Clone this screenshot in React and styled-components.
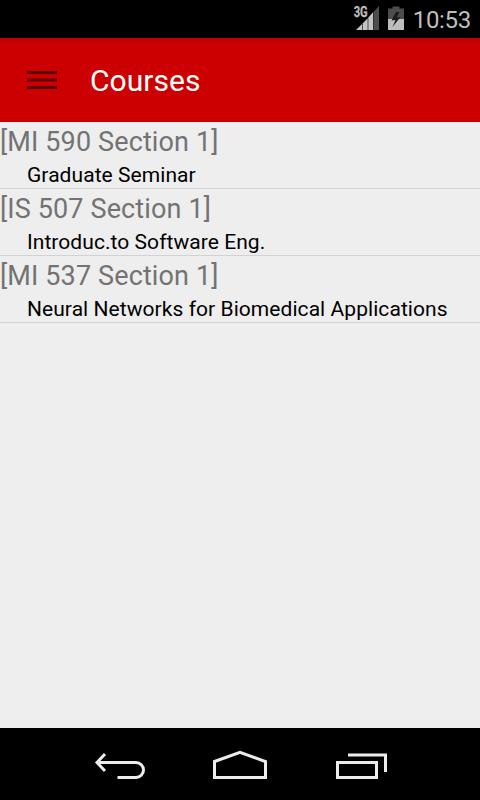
import React from "react";
import styled, { createGlobalStyle } from "styled-components";

const GlobalStyle = createGlobalStyle`
  * {
    box-sizing: border-box;
  }

  body {
    margin: 0;
    background: #000;
    font-family: Roboto, "Liberation Sans", sans-serif;
  }
`;

const Screen = styled.div`
  display: flex;
  flex-direction: column;
  height: 100vh;
  overflow: hidden;
  background: #eeeeee;
`;

const StatusBar = styled.div`
  display: flex;
  flex: none;
  align-items: center;
  justify-content: flex-end;
  height: 38px;
  padding-right: 9px;
  background: #000;
`;

const StatusIcon = styled.svg`
  display: block;
  flex: none;
  font-family: Roboto, sans-serif;
`;

const Clock = styled.span`
  margin-left: 8px;
  font-size: 24px;
  line-height: 38px;
  padding-top: 1px;
  letter-spacing: -0.3px;
  white-space: nowrap;
  color: #bebebe;
`;

const Toolbar = styled.header`
  display: flex;
  flex: none;
  align-items: center;
  height: 84px;
  padding-left: 27px;
  background: linear-gradient(#bd0000, #cc0000 6px);
`;

const MenuButton = styled.button`
  display: flex;
  width: 30px;
  padding: 0;
  border: none;
  background: none;
  cursor: pointer;
`;

const Title = styled.h1`
  margin: 0 0 0 33px;
  padding-top: 2px;
  font-size: 30px;
  font-weight: 400;
  line-height: 36px;
  letter-spacing: 0.05px;
  white-space: nowrap;
  color: #fff;
`;

const CourseList = styled.ul`
  flex: 1;
  margin: 0;
  padding: 0;
  list-style: none;
`;

const CourseRow = styled.li`
  height: 67px;
  border-bottom: 1px solid #d2d2d2;
`;

const CourseCode = styled.div`
  height: 39px;
  font-size: 27px;
  line-height: 41px;
  letter-spacing: 0.13px;
  white-space: nowrap;
  color: #737373;
`;

const CourseName = styled.div`
  padding-left: 27px;
  font-size: 21px;
  line-height: 28px;
  letter-spacing: 0.06px;
  white-space: nowrap;
  color: #000;
`;

const NavBar = styled.nav`
  display: flex;
  flex: none;
  justify-content: center;
  height: 72px;
  background: #000;
`;

const NavButton = styled.button`
  width: 121px;
  height: 72px;
  padding: 0;
  border: none;
  background: none;
  cursor: pointer;

  svg {
    display: block;
    margin: 0 auto;
    fill: none;
    stroke: #ececec;
    stroke-width: 3;
  }
`;

const courses = [
  { code: "[MI 590 Section 1]", name: "Graduate Seminar" },
  { code: "[IS 507 Section 1]", name: "Introduc.to Software Eng." },
  { code: "[MI 537 Section 1]", name: "Neural Networks for Biomedical Applications" },
];

function SignalIcon() {
  return (
    <StatusIcon width="28" height="38" viewBox="352 0 28 38">
      <path d="M356 30 L362 24 V30 Z M362.6 23.4 L367.7 18.2 V30 H362.6 Z M368.3 17.4 L373.2 12 V30 H368.3 Z" fill="#c4c4c4" />
      <path d="M373.8 11.4 L379 6 V30 H373.8 Z" fill="#4d4d4d" />
      <text x="353.7" y="17" fontSize="14" fontWeight="700" textLength="14" lengthAdjust="spacingAndGlyphs" fill="#bebebe" stroke="#bebebe" strokeWidth="0.3">
        3G
      </text>
    </StatusIcon>
  );
}

function BatteryIcon() {
  return (
    <StatusIcon width="25" height="38" viewBox="380 0 25 38">
      <path d="M388 8.5 H392.5 V6.5 H399.5 V8.5 H404 V20 H388 Z" fill="#4d4d4d" />
      <path d="M388 19 H404 V30 H388 Z" fill="#bebebe" />
      <path d="M396 12 L391.5 20.5 L395.5 20 L392.5 27 L400.5 17 L396.5 17.5 L399.5 12 Z" fill="#1a1a1a" />
    </StatusIcon>
  );
}

function App() {
  return (
    <Screen>
      <GlobalStyle />
      <StatusBar>
        <SignalIcon />
        <BatteryIcon />
        <Clock>10:53</Clock>
      </StatusBar>
      <Toolbar>
        <MenuButton aria-label="Menu">
          <svg width="30" height="18" viewBox="0 0 30 18">
            <path d="M0 0 H30 V3 H0 Z M0 7.5 H30 V10.5 H0 Z M0 15 H30 V18 H0 Z" fill="#5c0000" />
          </svg>
        </MenuButton>
        <Title>Courses</Title>
      </Toolbar>
      <CourseList>
        {courses.map((course) => (
          <CourseRow key={course.code}>
            <CourseCode>{course.code}</CourseCode>
            <CourseName>{course.name}</CourseName>
          </CourseRow>
        ))}
      </CourseList>
      <NavBar>
        <NavButton aria-label="Back">
          <svg width="60" height="72" viewBox="89 728 60 72">
            <path d="M105 754 L97 762.5 L105 771 M97 762.5 H136 A7.5 7.5 0 0 1 136 777.5 H117.5" />
          </svg>
        </NavButton>
        <NavButton aria-label="Home">
          <svg width="60" height="72" viewBox="210 728 60 72">
            <path d="M214.5 761.5 L240 752.3 L265.5 761.5 V777.5 H214.5 Z" />
          </svg>
        </NavButton>
        <NavButton aria-label="Recent apps">
          <svg width="60" height="72" viewBox="331 728 60 72">
            <path d="M337.5 762.5 H376.5 V777.5 H337.5 Z M348 755 H385.5 V772" />
          </svg>
        </NavButton>
      </NavBar>
    </Screen>
  );
}

export default App;
